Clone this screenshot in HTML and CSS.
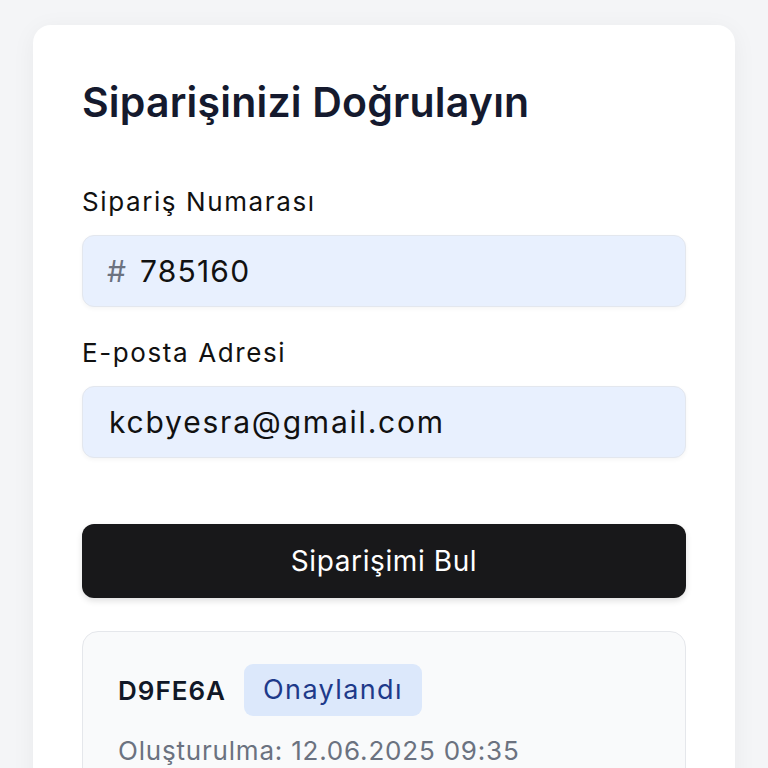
FILE: index.html
```html
<!DOCTYPE html>
<html lang="tr">
<head>
<meta charset="utf-8">
<link rel="stylesheet" href="styles.css">
</head>
<body>
<main class="card">
  <h1 class="title">Siparişinizi Doğrulayın</h1>
  <form class="form">
    <div class="field">
      <label class="label">Sipariş Numarası</label>
      <div class="input">
        <span class="hash">#</span>
        <span class="value num">785160</span>
      </div>
    </div>
    <div class="field">
      <label class="label">E-posta Adresi</label>
      <div class="input">
        <span class="value email">kcbyesra@gmail.com</span>
      </div>
    </div>
    <button type="button" class="btn">Siparişimi Bul</button>
  </form>
  <section class="result">
    <div class="result-head">
      <span class="code">D9FE6A</span>
      <span class="badge">Onaylandı</span>
    </div>
    <div class="meta">Oluşturulma: 12.06.2025 09:35</div>
  </section>
</main>
</body>
</html>
```
FILE: styles.css
```css
* { box-sizing: border-box; }
html, body { margin: 0; padding: 0; }
body {
  background: #f4f5f7;
  font-family: Inter, "Noto Sans", sans-serif;
  color: #111827;
  padding: 25px 33px 0 33px;
  height: 768px;
  overflow: hidden;
}
.card {
  background: #ffffff;
  border-radius: 18px;
  box-shadow: 0 4px 24px rgba(17, 24, 39, 0.05);
  padding: 51px 49px 49px 49px;
  min-height: 900px;
}
.title {
  margin: 0;
  font-size: 41px;
  font-weight: 600;
  line-height: 52px;
  letter-spacing: 0.2px;
  color: #151a2e;
}
.form {
  margin-top: 56px;
  display: flex;
  flex-direction: column;
}
.field {
  display: flex;
  flex-direction: column;
  gap: 16px;
  margin-bottom: 28px;
}
.field:last-of-type { margin-bottom: 0; }
.label {
  font-size: 26px;
  line-height: 35px;
  letter-spacing: 1.6px;
  color: #111111;
}
.input {
  height: 72px;
  background: #e8f0fe;
  border: 1.5px solid #e3e7ee;
  border-radius: 12px;
  box-shadow: 0 2px 4px rgba(0, 0, 0, 0.04);
  display: flex;
  align-items: center;
  padding: 0 24px;
  gap: 14px;
  font-size: 30px;
  color: #111111;
}
.hash { color: #6b7280; font-size: 30px; }
.num { letter-spacing: 1.2px; }
.email { letter-spacing: 1.8px; padding-left: 2px; }
.btn {
  margin-top: 66px;
  height: 74px;
  border: none;
  border-radius: 12px;
  background: #18181a;
  color: #ffffff;
  font-family: inherit;
  font-size: 28px;
  letter-spacing: 0.6px;
  box-shadow: 0 3px 6px rgba(0, 0, 0, 0.12);
}
.result {
  margin-top: 33px;
  background: #f9fafb;
  border: 1.5px solid #e5e7eb;
  border-radius: 16px;
  padding: 32px 35px;
}
.result-head {
  display: flex;
  align-items: center;
  gap: 18px;
}
.code {
  font-size: 26px;
  font-weight: 600;
  letter-spacing: 1px;
  color: #111827;
}
.badge {
  background: #dce8fb;
  color: #1e3a8a;
  font-size: 27px;
  border-radius: 9px;
  padding: 8px 19px;
  line-height: 36px;
  letter-spacing: 1.4px;
}
.meta {
  margin-top: 18px;
  font-size: 26px;
  line-height: 34px;
  letter-spacing: 0.8px;
  color: #6b7280;
}
```
